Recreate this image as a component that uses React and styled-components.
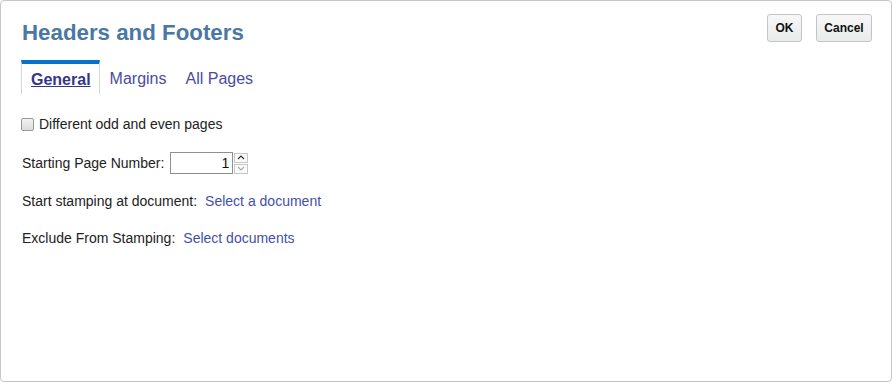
import React from "react";
import styled, { createGlobalStyle } from "styled-components";

const Global = createGlobalStyle`
  html, body { margin: 0; padding: 0; background: #fff; }
  body { font-family: Arial, "Liberation Sans", sans-serif; }
  * { box-sizing: border-box; }
`;

const Dialog = styled.div`
  width: 892px;
  height: 382px;
  border: 1px solid #c6c6c6;
  border-radius: 4px;
  background: #fff;
  padding: 13px 19px 0 20px;
  display: flex;
  flex-direction: column;
  color: #333;
`;

const Header = styled.div`
  display: flex;
  justify-content: space-between;
  align-items: flex-start;
`;

const Title = styled.h1`
  margin: 6px 0 0 1px;
  font-size: 22.3px;
  line-height: 26px;
  font-weight: bold;
  color: #4a78a3;
`;

const Buttons = styled.div`
  display: flex;
  gap: 14px;
`;

const Button = styled.button`
  width: ${(p) => p.$w}px;
  height: 28px;
  padding: 0;
  border: 1px solid #c4c4c4;
  border-radius: 3px;
  background: linear-gradient(#f7f7f7, #e9eaeb);
  font-family: Arial, "Liberation Sans", sans-serif;
  font-size: 12px;
  font-weight: bold;
  color: #111;
`;

const Tabs = styled.div`
  display: flex;
  margin-top: 14px;
  height: 34px;
`;

const Tab = styled.div`
  display: flex;
  align-items: center;
  padding: ${(p) => (p.$active ? "1px 8px 0 9px" : "0 8px 0 9px")};
  border-top: 4px solid ${(p) => (p.$active ? "#0572ce" : "transparent")};
  border-left: 1px solid ${(p) => (p.$active ? "#d6d6d6" : "transparent")};
  border-right: 1px solid ${(p) => (p.$active ? "#d6d6d6" : "transparent")};
  font-size: 16px;
  font-weight: ${(p) => (p.$active ? "bold" : "normal")};
  text-decoration: ${(p) => (p.$active ? "underline" : "none")};
  color: ${(p) => (p.$active ? "#34368a" : "#4b4c9c")};
  line-height: 20px;
`;

const Body = styled.div`
  display: flex;
  flex-direction: column;
  padding-left: 1px;
  margin-top: 22px;
  font-size: 14px;
  color: #222;
`;

const Row = styled.div`
  display: flex;
  align-items: center;
  height: ${(p) => p.$h}px;
  margin-top: ${(p) => p.$mt || 0}px;
`;

const Check = styled.span`
  width: 13px;
  height: 13px;
  margin-left: -1px;
  margin-right: 5px;
  border: 1px solid #9a9a9a;
  border-radius: 2px;
  background: linear-gradient(#f2f2f2, #dcdcdc);
  display: inline-block;
`;

const Label = styled.span`
  margin-right: ${(p) => p.$gap || 0}px;
`;

const NumberBox = styled.div`
  width: 63px;
  height: 22px;
  border: 1px solid #8f8f8f;
  padding-right: 3px;
  display: flex;
  align-items: center;
  justify-content: flex-end;
  font-size: 14px;
  color: #111;
`;

const Spinner = styled.div`
  display: flex;
  flex-direction: column;
  gap: 1px;
  margin-left: 1px;
`;

const SpinBtn = styled.div`
  width: 14px;
  height: 10px;
  border: 1px solid #c6c6c6;
  background: #fafafa;
  display: flex;
  align-items: center;
  justify-content: center;
`;

const Link = styled.a`
  color: #4350a8;
  text-decoration: none;
`;

const Arrow = ({ up, color }) => (
  <svg width="8" height="5" viewBox="0 0 8 5">
    <path
      d={up ? "M1 4 L4 1 L7 4" : "M1 1 L4 4 L7 1"}
      fill="none"
      stroke={color}
      strokeWidth="1.2"
    />
  </svg>
);

export default function App() {
  return (
    <>
      <Global />
      <Dialog>
        <Header>
          <Title>Headers and Footers</Title>
          <Buttons>
            <Button $w={35}>OK</Button>
            <Button $w={56}>Cancel</Button>
          </Buttons>
        </Header>
        <Tabs>
          <Tab $active>General</Tab>
          <Tab>Margins</Tab>
          <Tab>All Pages</Tab>
        </Tabs>
        <Body>
          <Row $h={16}>
            <Check />
            <Label>Different odd and even pages</Label>
          </Row>
          <Row $h={24} $mt={19}>
            <Label $gap={6}>Starting Page Number:</Label>
            <NumberBox>1</NumberBox>
            <Spinner>
              <SpinBtn>
                <Arrow up color="#333" />
              </SpinBtn>
              <SpinBtn>
                <Arrow color="#aaa" />
              </SpinBtn>
            </Spinner>
          </Row>
          <Row $h={16} $mt={18}>
            <Label $gap={8}>Start stamping at document:</Label>
            <Link>Select a document</Link>
          </Row>
          <Row $h={16} $mt={21}>
            <Label $gap={8}>Exclude From Stamping:</Label>
            <Link>Select documents</Link>
          </Row>
        </Body>
      </Dialog>
    </>
  );
}
